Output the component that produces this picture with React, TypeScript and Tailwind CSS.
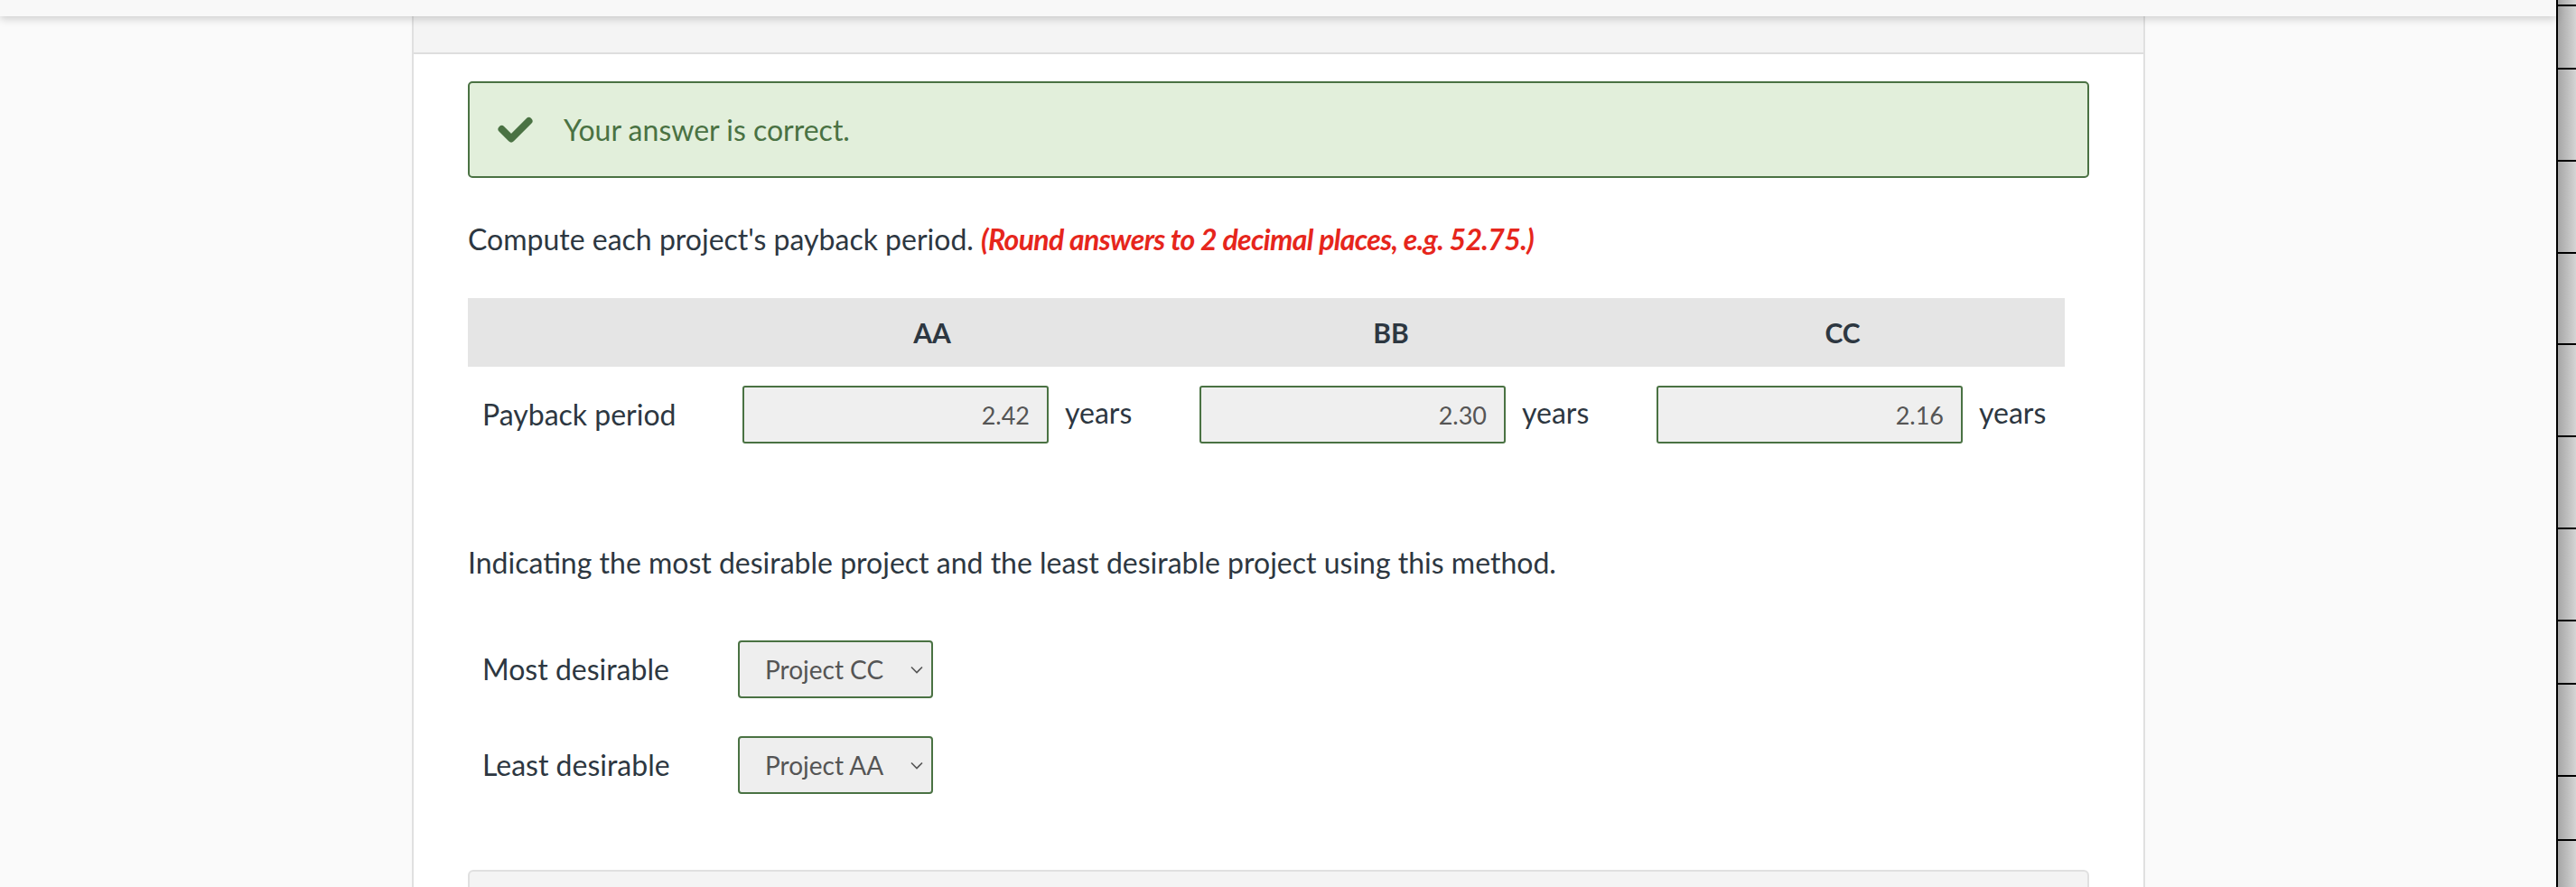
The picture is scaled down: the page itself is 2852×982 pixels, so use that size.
const cols = [
  { name: "AA", value: "2.42" },
  { name: "BB", value: "2.30" },
  { name: "CC", value: "2.16" },
]

// segments of the ruler strip on the right edge
const ticks = [5, 70, 102, 102, 101, 102, 102, 102, 70, 102, 71, 53]

function Check() {
  return (
    <svg width="42" height="34" viewBox="0 0 42 34" fill="none">
      <path d="M6.5 16 L17 26.5 L36.5 7" stroke="#4a7243" strokeWidth="8" strokeLinecap="round" strokeLinejoin="round" />
    </svg>
  )
}

function Chevron() {
  return (
    <svg width="14" height="9" viewBox="0 0 14 9" fill="none" className="pointer-events-none absolute right-[11px] top-[28px]">
      <path d="M1 1.5 L7 7.5 L13 1.5" stroke="#555" strokeWidth="1.6" />
    </svg>
  )
}

function Choice({ label, value }: { label: string; value: string }) {
  return (
    <div className="flex items-center">
      <div className="w-[299px] pl-[16px] text-[32px] text-[#2d3741]">{label}</div>
      <div className="relative">
        <select
          defaultValue={value}
          className="h-[64px] w-[216px] appearance-none rounded-[4px] border-2 border-[#4a7243] bg-[#eeeeee] pl-[28px] text-[28px] text-[#555] outline-none"
        >
          <option>Project AA</option>
          <option>Project BB</option>
          <option>Project CC</option>
        </select>
        <Chevron />
      </div>
    </div>
  )
}

export default function App() {
  return (
    <div className="flex h-[982px] w-[2852px] overflow-hidden bg-[#fafafa] font-['Lato',sans-serif]">
      <div className="flex flex-1 flex-col">
        {/* top bar */}
        <div className="relative z-10 h-[18px] shrink-0 bg-[#f8f8f8] shadow-[0_3px_10px_rgba(0,0,0,0.18)]" />

        <div className="flex flex-1">
          <div className="w-[456px]" />

          {/* panel */}
          <div className="flex w-[1919px] flex-col border-x-2 border-[#e0e0e0] bg-white">
            <div className="h-[42px] shrink-0 border-b-2 border-[#dedede] bg-[#f4f4f4]" />

            <div className="px-[60px] pt-[30px]">
              {/* success */}
              <div className="flex h-[107px] items-center rounded-[5px] border-2 border-[#4a7243] bg-[#e2efdb] pl-[29px]">
                <Check />
                <span className="ml-[33px] text-[32px] text-[#4a7243]">Your answer is correct.</span>
              </div>

              <p className="mt-[50px] text-[32px] leading-[36px] text-[#2d3741]">
                Compute each project's payback period.{" "}
                <span className="font-bold italic tracking-[-0.02em] text-[#e6261c]">
                  (Round answers to 2 decimal places, e.g. 52.75.)
                </span>
              </p>

              {/* table */}
              <div className="mt-[47px] w-[1768px]">
                <div className="grid h-[76px] grid-cols-[260px_508px_508px_1fr] items-center bg-[#e5e5e5] text-[30px] font-bold text-[#2d3741]">
                  <div />
                  {cols.map((c) => (
                    <div key={c.name} className="text-center">{c.name}</div>
                  ))}
                </div>
                <div className="grid grid-cols-[260px_506px_506px_1fr] items-center pt-[21px]">
                  <div className="pl-[16px] text-[32px] text-[#2d3741]">Payback period</div>
                  {cols.map((c) => (
                    <div key={c.name} className="flex items-center pl-[44px]">
                      <input
                        readOnly
                        value={c.value}
                        className="h-[64px] w-[339px] rounded-[3px] border-2 border-[#4a7243] bg-[#efefef] pr-[19px] text-right text-[27px] text-[#555] outline-none"
                      />
                      <span className="ml-[18px] -mt-[4px] text-[32px] text-[#2d3741]">years</span>
                    </div>
                  ))}
                </div>
              </div>

              <p className="mt-[114px] text-[32px] leading-[36px] text-[#2d3741]">
                Indicating the most desirable project and the least desirable project using this method.
              </p>

              <div className="mt-[68px] flex flex-col gap-[42px]">
                <Choice label="Most desirable" value="Project CC" />
                <Choice label="Least desirable" value="Project AA" />
              </div>

              <div className="mt-[84px] h-[40px] rounded-t-[6px] border-2 border-[#e0e0e0] bg-[#f4f4f4]" />
            </div>
          </div>

          <div className="flex-1" />
        </div>
      </div>

      {/* ruler strip */}
      <div className="flex w-[22px] flex-col border-l-2 border-black bg-gradient-to-r from-[#a6a6a6] to-[#d4d4d4]">
        {ticks.map((h, i) => (
          <div key={i} style={{ height: h }} className={i === 0 ? "" : "border-t-2 border-black"} />
        ))}
      </div>
    </div>
  )
}
